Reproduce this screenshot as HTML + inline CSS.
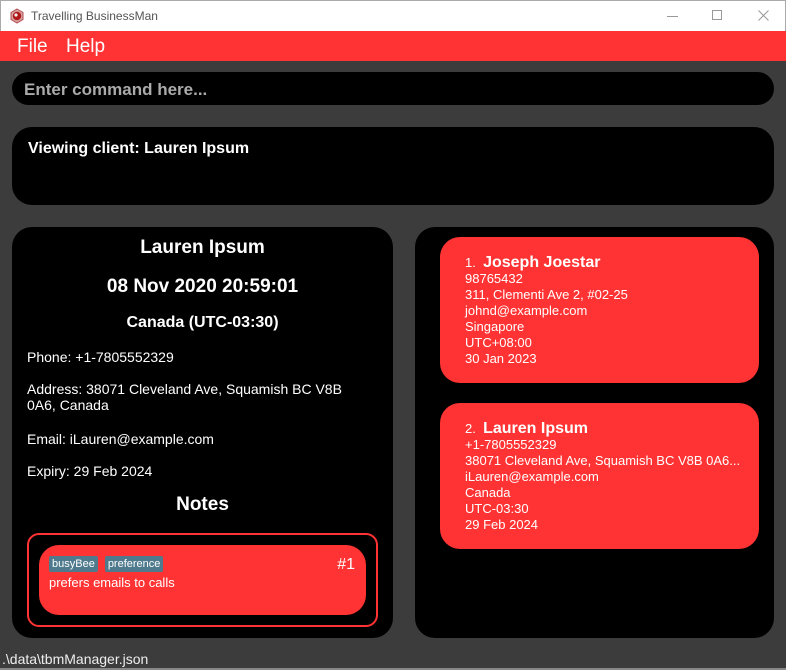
<!DOCTYPE html>
<html><head><meta charset="utf-8"><style>
*{margin:0;padding:0;box-sizing:border-box}
body{width:786px;height:670px;overflow:hidden;background:#3c3c3c;font-family:"Liberation Sans",Arial,sans-serif;position:relative}
.a{position:absolute}
.title{left:0;top:0;width:786px;height:31px;background:#fff;border:1px solid #aaa;border-bottom:none}
.menu{left:0;top:31px;width:786px;height:30px;background:#ff3333;color:#fff;font-size:19px}
.blk{background:#000}
.w{color:#fff}
.card{background:#ff3333;border-radius:20px;color:#fff;font-size:13px;line-height:16px;padding:18px 0 0 25px}
.card b{font-size:16px}
.tag{display:inline-block;background:#4f7a8d;color:#fff;font-size:11px;padding:2px 3px;margin-right:7px;border-radius:2px}
</style></head><body>
<div class="a title">
  <svg class="a" style="left:8px;top:7px" width="16" height="16" viewBox="0 0 16 16"><polygon points="8,1 14,4.5 14,11.5 8,15 2,11.5 2,4.5" fill="#d8a0a0" stroke="#b05050"/><circle cx="8" cy="8" r="4.2" fill="#b01818"/><circle cx="7" cy="7" r="1.6" fill="#eee"/></svg>
  <div class="a" style="left:30px;top:8px;font-size:12px;color:#555">Travelling BusinessMan</div>
  <div class="a" style="left:666px;top:15px;width:11px;height:1px;background:#999"></div>
  <div class="a" style="left:711px;top:9px;width:10px;height:10px;border:1px solid #999"></div>
  <svg class="a" style="left:757px;top:9px" width="11" height="11" viewBox="0 0 11 11"><path d="M0.5 0.5L10.5 10.5M10.5 0.5L0.5 10.5" stroke="#999" stroke-width="1"/></svg>
</div>
<div class="a menu"><span class="a" style="left:17px;top:5px">File</span><span class="a" style="left:66px;top:5px">Help</span></div>
<div class="a blk" style="left:12px;top:72px;width:762px;height:33px;border-radius:17px"><div class="a" style="left:12px;top:8px;font-size:17px;font-weight:bold;color:#aaa">Enter command here...</div></div>
<div class="a blk" style="left:12px;top:127px;width:762px;height:78px;border-radius:20px"><div class="a w" style="left:16px;top:13px;font-size:16px;font-weight:bold">Viewing client: Lauren Ipsum</div></div>
<div class="a blk" style="left:12px;top:227px;width:381px;height:411px;border-radius:20px">
  <div class="a w" style="left:0;width:381px;top:10px;text-align:center;font-size:19px;font-weight:bold">Lauren Ipsum</div>
  <div class="a w" style="left:0;width:381px;top:49px;text-align:center;font-size:19px;font-weight:bold">08 Nov 2020 20:59:01</div>
  <div class="a w" style="left:0;width:381px;top:87px;text-align:center;font-size:16px;font-weight:bold">Canada (UTC-03:30)</div>
  <div class="a w" style="left:15px;top:122px;font-size:14px">Phone: +1-7805552329</div>
  <div class="a w" style="left:15px;top:154px;font-size:14px;line-height:16px;width:345px">Address: 38071 Cleveland Ave, Squamish BC V8B 0A6, Canada</div>
  <div class="a w" style="left:15px;top:204px;font-size:14px">Email: iLauren@example.com</div>
  <div class="a w" style="left:15px;top:236px;font-size:14px">Expiry: 29 Feb 2024</div>
  <div class="a w" style="left:0;width:381px;top:267px;text-align:center;font-size:19px;font-weight:bold">Notes</div>
  <div class="a" style="left:15px;top:306px;width:351px;height:94px;border:2px solid #ff3333;border-radius:12px"></div>
  <div class="a" style="left:27px;top:318px;width:327px;height:70px;background:#ff3333;border-radius:20px">
    <div class="a" style="left:10px;top:9px"><span class="tag">busyBee</span><span class="tag">preference</span></div>
    <div class="a w" style="right:11px;top:11px;font-size:16px">#1</div>
    <div class="a w" style="left:10px;top:30px;font-size:13px">prefers emails to calls</div>
  </div>
</div>
<div class="a blk" style="left:415px;top:227px;width:359px;height:411px;border-radius:20px"></div>
<div class="a card" style="left:440px;top:237px;width:319px;height:146px">1.&nbsp; <b>Joseph Joestar</b><br>98765432<br>311, Clementi Ave 2, #02-25<br>johnd@example.com<br>Singapore<br>UTC+08:00<br>30 Jan 2023</div>
<div class="a card" style="left:440px;top:403px;width:319px;height:146px">2.&nbsp; <b>Lauren Ipsum</b><br>+1-7805552329<br>38071 Cleveland Ave, Squamish BC V8B 0A6...<br>iLauren@example.com<br>Canada<br>UTC-03:30<br>29 Feb 2024</div>
<div class="a w" style="left:2px;top:651px;font-size:14px;color:#eee">.\data\tbmManager.json</div>
<div class="a" style="left:0;top:668px;width:786px;height:2px;background:#888"></div>
</body></html>
